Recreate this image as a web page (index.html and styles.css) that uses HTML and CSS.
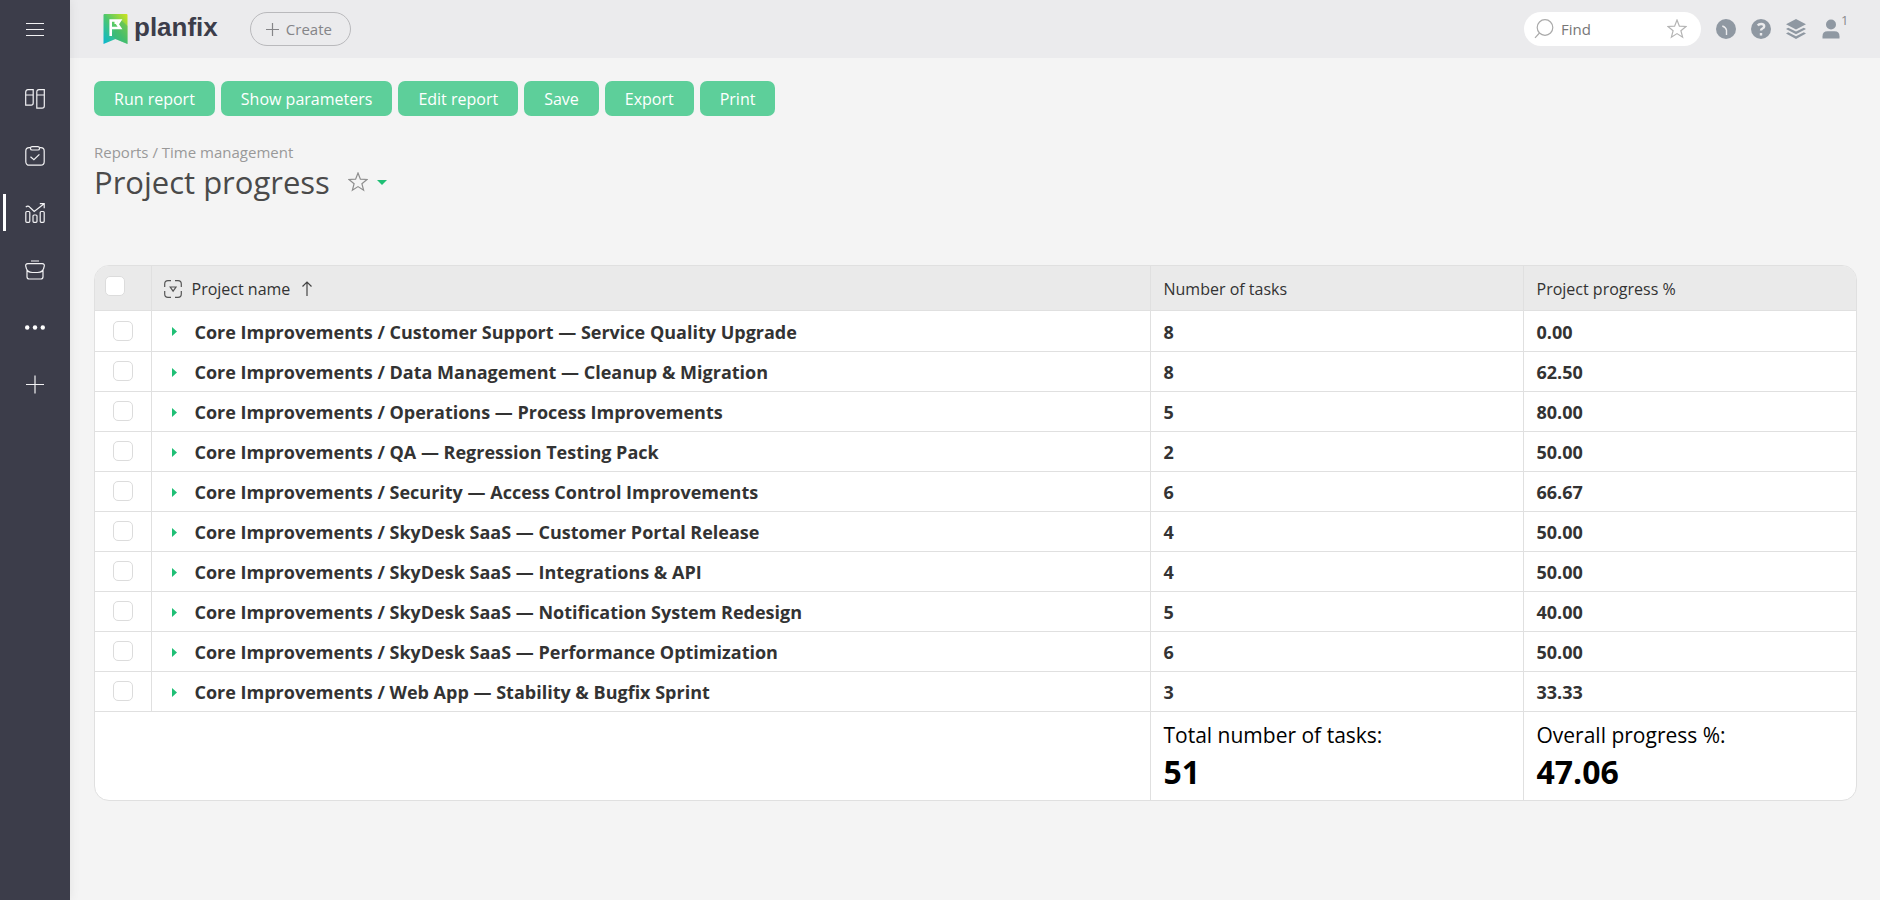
FILE: index.html
```html
<!DOCTYPE html>
<html lang="en">
<head>
<meta charset="utf-8">
<meta name="viewport" content="width=device-width, initial-scale=1">
<title>Project progress</title>
<link rel="stylesheet" href="styles.css">
</head>
<body>
<div class="app">
  <aside class="sidebar">
    <button class="menu-toggle" type="button" aria-label="Menu">
      <svg class="icon" viewBox="0 0 20 20"><path d="M1 4.500h18M1 10.500h18M1 16.500h18"/></svg>
    </button>
    <nav class="nav" aria-label="Main">
      <a class="nav-item" href="#" aria-label="Boards">
        <svg class="icon" viewBox="0 0 20 20"><path d="M.7 16V3.200Q.7.700 3 .7h5.200V14q0 2.200-2 2.200H.7zM.7 6h7.500M11.800 19.200V3q0-2.300 2.200-2.300h5.300V17q0 2.200-2.200 2.200zM11.800 6h7.500"/></svg>
      </a>
      <a class="nav-item" href="#" aria-label="Tasks">
        <svg class="icon" viewBox="0 0 20 20"><path d="M5.500 1.700H4.200A3.400 3.400 0 0 0 .8 5.100v10.700a3.400 3.400 0 0 0 3.400 3.400h11.600a3.400 3.400 0 0 0 3.400-3.400V5.100a3.400 3.400 0 0 0-3.400-3.400h-1.300M5.500 10.800l3.400 3 5.500-5.400"/><rect x="5.500" y=".7" width="9" height="3.300" rx="1.600"/></svg>
      </a>
      <a class="nav-item active" href="#" aria-label="Reports" aria-current="page">
        <svg class="icon" viewBox="0 0 20 20"><path d="M.8 4.200q2-2 4 0l4.400 4.200L18.800 1M14.800.7h4.400v4.600"/><rect x=".8" y="8.500" width="4" height="10.800" rx="1"/><rect x="8" y="12" width="4" height="7.300" rx="1"/><rect x="15.200" y="8.500" width="4" height="10.800" rx="1"/></svg>
      </a>
      <a class="nav-item" href="#" aria-label="Projects">
        <svg class="icon" viewBox="0 0 20 20"><path d="M6 1h8M2 10v6.700q0 2.300 2.300 2.300h11.400q2.300 0 2.300-2.300V10M2.800 3.700h14.400q2.600 0 2 2.600-.9 6.200-6.700 6.200h-5Q1.700 12.500.8 6.300q-.6-2.600 2-2.600z"/></svg>
      </a>
      <a class="nav-item" href="#" aria-label="More">
        <svg class="icon dots" viewBox="0 0 20 20"><circle cx="2.200" cy="10.500" r="2.200"/><circle cx="10" cy="10.500" r="2.200"/><circle cx="17.800" cy="10.500" r="2.200"/></svg>
      </a>
      <a class="nav-item" href="#" aria-label="Add">
        <svg class="icon" viewBox="0 0 20 20"><path d="M1 10.500h18M10 1.500v18"/></svg>
      </a>
    </nav>
  </aside>

  <div class="page">
    <header class="topbar">
      <a class="logo" href="#">
        <svg class="logo-mark" viewBox="0 0 25 30" aria-hidden="true">
          <defs><linearGradient id="mark" x1="0" y1="1" x2="1" y2="0"><stop offset="0" stop-color="#08b6d4"/><stop offset=".5" stop-color="#4ec76d"/><stop offset="1" stop-color="#d0e41c"/></linearGradient></defs>
          <path fill="url(#mark)" d="M1.500 0h22q1 0 1 1v29L12.500 25 .5 30V1q0-1 1-1z"/>
          <path fill="#3ab26c" fill-opacity=".45" d="M18 6l6.500 6v18L12.500 25 8 21z"/>
          <path fill="none" stroke="#fff" stroke-width="2.600" d="M7.700 22V6.500h9.300l-2.500 3.800 2.500 3.700H7.700"/>
          <path fill="#fff" d="M11.500 6h3v4h-3z"/>
        </svg>
        <span class="logo-text">planfix</span>
      </a>
      <button class="create" type="button">
        <svg class="create-plus" viewBox="0 0 13 13" aria-hidden="true"><path d="M0 6.500h13M6.500 0v13"/></svg>
        Create
      </button>
      <div class="tools">
        <div class="search">
          <svg class="search-icon" viewBox="0 0 20 20" aria-hidden="true"><circle cx="11" cy="8.500" r="7.800"/><path d="M5.500 14L1 18.800"/></svg>
          <input class="search-input" type="text" placeholder="Find" aria-label="Find">
          <button class="plain" type="button" aria-label="Favorites">
            <svg class="star" viewBox="0 0 20 20"><path d="M10 1l2.400 6.200 6.600.3-5.100 4.200 1.700 6.500-5.600-3.600-5.600 3.600 1.700-6.500L1 7.500l6.600-.3z"/></svg>
          </button>
        </div>
        <button class="plain" type="button" aria-label="Recent">
          <svg class="tool-icon" viewBox="0 0 20 20"><circle cx="10" cy="10" r="10"/><path class="cut" d="M6.300 7q3.700 1.300 4.200 4.200V16"/></svg>
        </button>
        <button class="plain" type="button" aria-label="Help">
          <svg class="tool-icon" viewBox="0 0 20 20"><circle cx="10" cy="10" r="10"/><path class="cut thick" d="M6.800 6.500q1-1.500 3.400-1.500 3 0 3 2.300 0 1.500-1.700 2.200-1.500.700-1.500 2M10 14v2.500"/></svg>
        </button>
        <button class="plain" type="button" aria-label="Layers">
          <svg class="tool-icon" viewBox="0 0 20 20"><path d="M10 0l10 5.200-10 5.300L0 5.200zM2.200 8.700L10 12.600l7.800-3.900L20 10l-10 5.300L0 10zM2.200 13.200L10 17.200l7.800-4L20 14.500 10 20 0 14.500z"/></svg>
        </button>
        <button class="plain profile" type="button" aria-label="Profile">
          <svg class="tool-icon" viewBox="0 0 20 20"><circle cx="10" cy="5.500" r="5"/><path d="M1.500 19.500v-2.300q0-5 5-5h7q5 0 5 5v2.300z"/></svg>
          <span class="badge">1</span>
        </button>
      </div>
    </header>

    <main class="content">
      <div class="actions">
        <button class="action" type="button">Run report</button>
        <button class="action" type="button">Show parameters</button>
        <button class="action" type="button">Edit report</button>
        <button class="action" type="button">Save</button>
        <button class="action" type="button">Export</button>
        <button class="action" type="button">Print</button>
      </div>

      <nav class="breadcrumbs" aria-label="Breadcrumbs"><a href="#">Reports</a> / <a href="#">Time management</a></nav>
      <div class="heading">
        <h1 class="title">Project progress</h1>
        <button class="plain" type="button" aria-label="Add to favorites">
          <svg class="star dark" viewBox="0 0 20 20"><path d="M10 1l2.400 6.200 6.600.3-5.100 4.200 1.700 6.500-5.600-3.600-5.600 3.600 1.700-6.500L1 7.500l6.600-.3z"/></svg>
        </button>
        <button class="plain" type="button" aria-label="Report menu">
          <svg class="caret-down" viewBox="0 0 10 5"><path d="M0 0h10L5 5z"/></svg>
        </button>
      </div>

      <div class="report">
        <table class="grid">
          <colgroup><col class="col-check"><col><col class="col-tasks"><col class="col-progress"></colgroup>
          <thead>
            <tr>
              <th class="check-all" scope="col"><input class="check" type="checkbox" aria-label="Select all"></th>
              <th class="col-name" scope="col">
                <div class="sort">
                  <svg class="group-icon" viewBox="0 0 18 18" aria-hidden="true"><path d="M.7 7V4Q.7.700 4 .7h3M11 .7h3q3.300 0 3.300 3.300v3M17.300 11v3q0 3.300-3.300 3.300h-3M7 17.300H4Q.7 17.300.7 14v-3M6.200 7h5.800L9.100 11.200z"/></svg>
                  <span>Project name</span>
                  <svg class="arrow-up" viewBox="0 0 10 15" aria-hidden="true"><path d="M5 15V1M.5 5.500L5 1l4.500 4.500"/></svg>
                </div>
              </th>
              <th scope="col">Number of tasks</th>
              <th scope="col">Project progress %</th>
            </tr>
          </thead>
          <tbody id="rows"></tbody>
          <tfoot>
            <tr>
              <td colspan="2"></td>
              <td><div class="total-label">Total number of tasks:</div><div class="total-value">51</div></td>
              <td><div class="total-label">Overall progress %:</div><div class="total-value">47.06</div></td>
            </tr>
          </tfoot>
        </table>
      </div>
    </main>
  </div>
</div>
<script src="report.js"></script>
</body>
</html>
```
FILE: styles.css
```css
* { box-sizing: border-box; }

body {
  margin: 0;
  background: #f4f4f4;
  color: #333;
  font-family: "Open Sans", "Noto Sans", sans-serif;
  font-size: 16px;
}

a { color: inherit; text-decoration: none; }
button, input { font: inherit; }

.app { display: flex; min-height: 100vh; }

/* Sidebar */
.sidebar {
  flex: none;
  width: 70px;
  background: #3c3d4a;
  box-shadow: 0 0 10px rgba(0, 0, 0, .08);
  z-index: 1;
}
.menu-toggle {
  display: flex;
  align-items: center;
  justify-content: center;
  width: 100%;
  height: 58px;
  padding: 0;
  border: 0;
  background: none;
}
.nav { margin-top: 12px; }
.nav-item {
  position: relative;
  display: flex;
  align-items: center;
  justify-content: center;
  height: 57px;
}
.nav-item.active::before {
  content: "";
  position: absolute;
  left: 3px;
  top: 10px;
  width: 3px;
  height: 37px;
  background: #fff;
}
.icon { width: 20px; height: 20px; fill: none; stroke: #f2f2f4; stroke-width: 1.2; }
.icon.dots { fill: #fff; stroke: none; }

/* Top bar */
.page { flex: 1; min-width: 0; }
.topbar {
  display: flex;
  align-items: center;
  height: 58px;
  padding: 0 39px 0 33px;
  background: #ebebed;
}
.logo { display: flex; align-items: center; gap: 6px; }
.logo-mark { width: 25px; height: 30px; }
.logo-text {
  color: #3c3d4a;
  font: bold 26px/30px "Liberation Sans", Arial, sans-serif;
  padding-bottom: 4px;
}
.create {
  display: flex;
  align-items: center;
  gap: 7px;
  height: 34px;
  margin-left: 32px;
  padding: 0 18px 0 15px;
  border: 1px solid #b9b9bc;
  border-radius: 17px;
  background: none;
  color: #858588;
  font-size: 15px;
}
.create-plus { width: 13px; height: 13px; stroke: #858588; stroke-width: 1.2; }
.tools { display: flex; align-items: center; gap: 15px; margin-left: auto; }
.search {
  display: flex;
  align-items: center;
  width: 177px;
  height: 34px;
  padding: 0 14px 0 10px;
  border-radius: 17px;
  background: #fff;
}
.search-icon { flex: none; width: 20px; height: 20px; fill: none; stroke: #aaa; stroke-width: 1.2; }
.search-input {
  flex: 1;
  min-width: 0;
  padding: 0 7px;
  border: 0;
  outline: 0;
  background: none;
  color: #777;
  font-size: 15px;
}
.search-input::placeholder { color: #777; opacity: 1; }
.plain { display: flex; padding: 0; border: 0; background: none; }
.star { width: 20px; height: 20px; fill: none; stroke: #b4b4b4; stroke-width: 1.2; }
.star.dark { stroke: #8e8e8e; }
.tool-icon { width: 20px; height: 20px; fill: #8f98a2; }
.tool-icon .cut { fill: none; stroke: #ebebed; stroke-width: 1.4; }
.tool-icon .thick { stroke-width: 2.4; }
.profile { position: relative; }
.badge {
  position: absolute;
  left: 20px;
  top: -7px;
  color: #8a8a8e;
  font-size: 13px;
  line-height: 16px;
}

/* Page head */
.content { padding: 23px 23px 40px 24px; }
.actions { display: flex; flex-wrap: wrap; gap: 6px; }
.action {
  height: 35px;
  padding: 0 20px;
  border: 0;
  border-radius: 7px;
  background: #5dcf9a;
  color: #fff;
  font-size: 16px;
}
.breadcrumbs { margin-top: 25px; color: #999; font-size: 15px; line-height: 22px; }
.heading { display: flex; align-items: center; gap: 9px; }
.title { margin: 0 9px 0 0; color: #4a4a4a; font-size: 31px; font-weight: 400; line-height: 38px; }
.caret-down { width: 10px; height: 5px; fill: #1fbf75; }

/* Report table */
.report {
  margin-top: 64px;
  overflow: hidden;
  border: 1px solid #e0e0e0;
  border-radius: 15px;
  background: #fff;
}
.grid { width: 100%; border-collapse: collapse; table-layout: fixed; }
.col-check { width: 56px; }
.col-tasks { width: 373px; }
.col-progress { width: 333px; }
.grid th, .grid td {
  padding: 2px 12px 0 13px;
  border: 1px solid #e0e0e0;
  text-align: left;
}
.grid tr > :first-child { border-left: 0; }
.grid tr > :last-child { border-right: 0; }
.grid thead th {
  height: 44px;
  border-top: 0;
  background: #eaeaea;
  font-size: 16px;
  font-weight: 400;
}
.grid thead .check-all { padding: 0 0 4px 10px; }
.grid thead .col-name { padding: 2px 12px 0 12px; }
.grid tbody td { height: 40px; font-size: 18px; font-weight: 700; }
.grid tbody tr:first-child td { height: 41px; }
.grid tbody .cell-check { padding: 0; text-align: center; }
.grid tfoot td { height: 89px; padding-top: 0; border-bottom: 0; color: #000; }
.check {
  display: block;
  appearance: none;
  width: 20px;
  height: 20px;
  margin: 0;
  border: 1px solid #dcdcdc;
  border-radius: 5px;
  background: #fff;
}
.cell-check .check { margin: 0 auto; }
.sort { display: flex; align-items: center; gap: 10px; }
.group-icon { width: 18px; height: 18px; fill: none; stroke: #555; stroke-width: 1.2; }
.arrow-up { width: 10px; height: 15px; margin-left: 2px; fill: none; stroke: #444; stroke-width: 1.2; }
.name { display: flex; align-items: center; gap: 18px; padding-left: 7px; }
.caret-right { width: 5px; height: 9px; fill: #1fbf75; }
.total-label { font-size: 21px; line-height: 32px; }
.total-value { font-size: 32px; font-weight: 700; line-height: 42px; }
```
FILE: report.js
```js
const projects = [
  ["Customer Support — Service Quality Upgrade", 8, "0.00"],
  ["Data Management — Cleanup & Migration", 8, "62.50"],
  ["Operations — Process Improvements", 5, "80.00"],
  ["QA — Regression Testing Pack", 2, "50.00"],
  ["Security — Access Control Improvements", 6, "66.67"],
  ["SkyDesk SaaS — Customer Portal Release", 4, "50.00"],
  ["SkyDesk SaaS — Integrations & API", 4, "50.00"],
  ["SkyDesk SaaS — Notification System Redesign", 5, "40.00"],
  ["SkyDesk SaaS — Performance Optimization", 6, "50.00"],
  ["Web App — Stability & Bugfix Sprint", 3, "33.33"]
];

document.getElementById("rows").innerHTML = projects.map(([name, tasks, progress]) => {
  const full = ("Core Improvements / " + name).replace(/&/g, "&amp;");
  return `<tr>
    <td class="cell-check"><input class="check" type="checkbox" aria-label="${full}"></td>
    <td><div class="name"><button class="plain" type="button" aria-label="Expand"><svg class="caret-right" viewBox="0 0 5 9"><path d="M0 0l5 4.500L0 9z"/></svg></button><span>${full}</span></div></td>
    <td>${tasks}</td>
    <td>${progress}</td>
  </tr>`;
}).join("");
```
